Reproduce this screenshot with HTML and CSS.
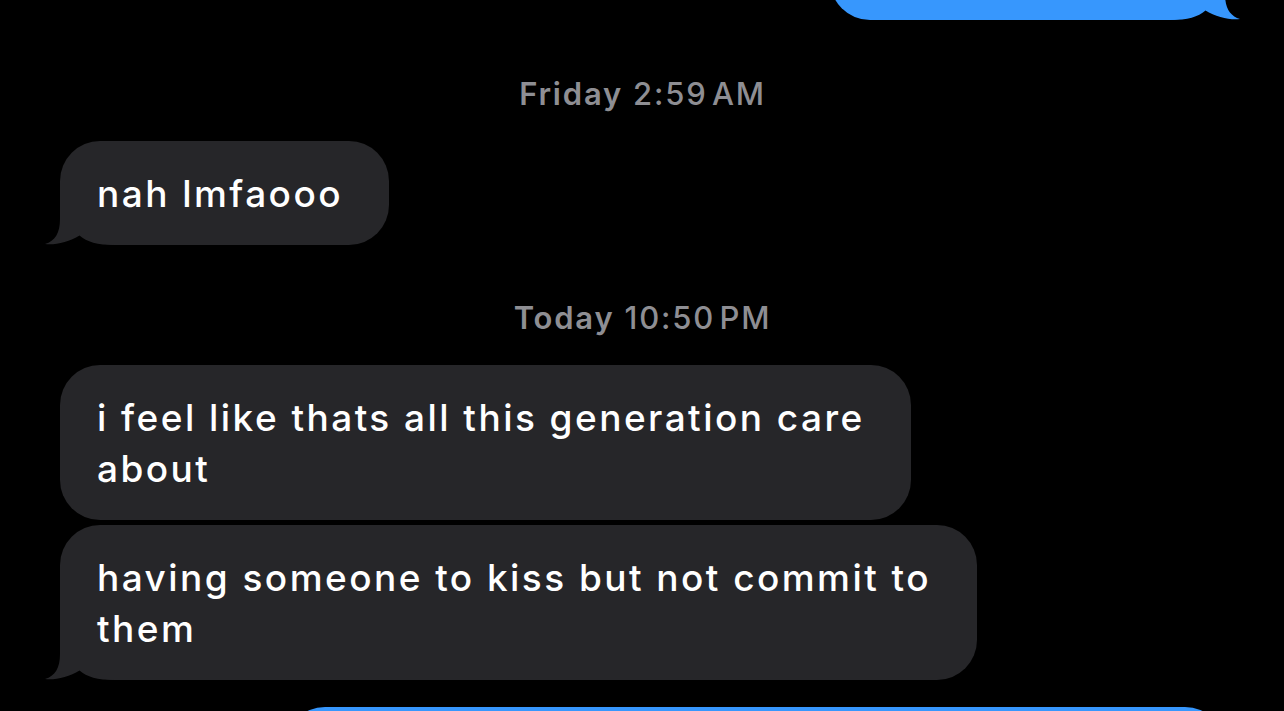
FILE: index.html
```html
<!DOCTYPE html>
<html lang="en">
<head>
<meta charset="utf-8">
<title>Messages</title>
<link rel="stylesheet" href="styles.css">
</head>
<body>
<div class="thread">
  <div class="row me">
    <div class="bubble blue cut-top has-tail" style="width:395px">
      <svg class="tail tail-right" viewBox="0 0 70 60" width="70" height="60"><path d="M15 0 L15 34 C15 48 10 56 0 59 C9 60.5 24 57 34.5 50.5 C42 57 52 60 70 60 L70 0 Z"/></svg>
    </div>
  </div>

  <div class="stamp first"><span class="day">Friday</span> 2:59&#8202;AM</div>

  <div class="row them">
    <div class="bubble gray has-tail"><span class="text">nah lmfaooo</span>
      <svg class="tail tail-left" viewBox="0 0 70 60" width="70" height="60"><path d="M15 0 L15 34 C15 48 10 56 0 59 C9 60.5 24 57 34.5 50.5 C42 57 52 60 70 60 L70 0 Z"/></svg>
    </div>
  </div>

  <div class="stamp"><span class="day">Today</span> 10:50&#8202;PM</div>

  <div class="group">
    <div class="row them">
      <div class="bubble gray"><span class="text">i feel like thats all this generation care<br>about</span></div>
    </div>
    <div class="row them">
      <div class="bubble gray has-tail"><span class="text">having someone to kiss but not commit to<br>them</span>
        <svg class="tail tail-left" viewBox="0 0 70 60" width="70" height="60"><path d="M15 0 L15 34 C15 48 10 56 0 59 C9 60.5 24 57 34.5 50.5 C42 57 52 60 70 60 L70 0 Z"/></svg>
      </div>
    </div>
  </div>

  <div class="row me next">
    <div class="bubble blue" style="width:940px"></div>
  </div>
</div>
</body>
</html>
```

FILE: styles.css
```css
html, body {
  margin: 0;
  padding: 0;
  background: #000;
  height: 711px;
  overflow: hidden;
}

body {
  font-family: Inter, "Noto Sans", "Liberation Sans", sans-serif;
  color: #fff;
}

.thread {
  display: flex;
  flex-direction: column;
  padding: 0 59px 0 60px;
}

.row {
  display: flex;
}

.row.them {
  justify-content: flex-start;
}

.row.me {
  justify-content: flex-end;
}

.bubble {
  position: relative;
  z-index: 0;
  box-sizing: border-box;
  border-radius: 40px;
  font-size: 37px;
  font-weight: 500;
  line-height: 51px;
  letter-spacing: 2.45px;
  white-space: nowrap;
}

.bubble .text {
  position: relative;
}

.bubble.gray {
  background: #262629;
  padding: 27px 46px 26px 37px;
}

.bubble.gray.has-tail {
  border-bottom-left-radius: 56px;
}

.bubble.blue {
  background: #3797fd;
  padding: 27px 37px 26px 47px;
  height: 105px;
}

.bubble.blue.has-tail {
  border-bottom-right-radius: 56px;
}

.cut-top {
  margin-top: -85px;
}

.tail {
  position: absolute;
  bottom: 0;
  display: block;
  z-index: -1;
}

.tail-left {
  left: -15px;
}

.tail-left path {
  fill: #262629;
}

.tail-right {
  right: -15px;
  transform: scaleX(-1);
}

.tail-right path {
  fill: #3797fd;
}

.stamp {
  text-align: center;
  color: #8e8e93;
  font-size: 31px;
  line-height: 38px;
  font-weight: 500;
  letter-spacing: 1.8px;
  margin: 54px 0 28px;
}

.stamp.first {
  margin-top: 55px;
}

.stamp .day {
  font-weight: 600;
}

.group {
  display: flex;
  flex-direction: column;
  gap: 5px;
}

.next {
  margin-top: 27px;
}
```
